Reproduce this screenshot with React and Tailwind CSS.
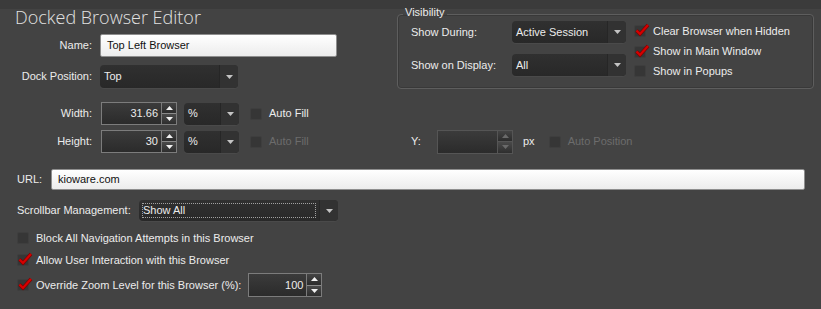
import React from 'react';

// small triangle used by combos and spin buttons
const Arrow = ({ up = false, color = '#c4c4c4' }) => (
  <svg width="7" height="4" viewBox="0 0 7 4">
    <path d={up ? 'M0 4L3.5 0L7 4Z' : 'M0 0L7 0L3.5 4Z'} fill={color} />
  </svg>
);

const Combo = ({ value, className = '', focus = false }) => (
  <div className={`flex rounded-[4px] bg-gradient-to-b from-[#303030] to-[#282828] shadow-[0_1px_0_#4a4a4a] ${className}`}>
    <div className="flex flex-1 items-center p-[3px]">
      <div className={`flex h-full flex-1 items-center ${focus ? 'border border-dotted border-[#a0a0a0]' : 'pl-[1px]'}`}>
        {value}
      </div>
    </div>
    <div className="flex w-[19px] items-center justify-center rounded-r-[4px] border-l border-[#262626] bg-[#323232]">
      <Arrow />
    </div>
  </div>
);

const Spinner = ({ value, className = 'w-[61px]', disabled = false, h = 'h-[23px]' }) => {
  const edge = disabled ? 'border-[#555555]' : 'border-[#7c7c7c]';
  const tri = disabled ? '#6a6a6a' : '#f2f2f2';
  return (
    <div className={`flex ${h}`}>
      <div className={`flex items-center justify-end border pr-[3px] bg-gradient-to-b from-[#3b3b3b] to-[#2b2b2b] ${edge} ${className}`}>
        {value}
      </div>
      <div className={`flex w-[15px] flex-col border-y border-r ${edge}`}>
        <div className="flex flex-1 items-center justify-center bg-gradient-to-b from-[#444444] to-[#2c2c2c]">
          <Arrow up color={tri} />
        </div>
        <div className={`h-px ${disabled ? 'bg-[#555555]' : 'bg-[#8a8a8a]'}`} />
        <div className="flex flex-1 items-center justify-center bg-gradient-to-b from-[#4a4a4a] to-[#2e2e2e]">
          <Arrow color={tri} />
        </div>
      </div>
    </div>
  );
};

const Check = ({ label, checked = false, disabled = false, className = '' }) => (
  <div className={`flex items-center gap-[7px] ${disabled ? 'text-[#6c6c6c]' : ''} ${className}`}>
    <div className="relative h-[12px] w-[12px] shrink-0 rounded-[2px] border border-[#3e3e3e] bg-[#363636]">
      {checked && (
        <svg className="absolute left-[0px] top-[-3px]" width="15" height="14" viewBox="0 0 15 14">
          <path d="M1.5 7.5 L5 11 L13 2" fill="none" stroke="#7a0000" strokeWidth="3.4" />
          <path d="M1.5 7.5 L5 11 L13 2" fill="none" stroke="#d60000" strokeWidth="2.2" />
        </svg>
      )}
    </div>
    <span>{label}</span>
  </div>
);

const TextBox = ({ value, className = '' }) => (
  <div className={`flex items-center rounded-[2px] border border-[#8e8e8e] bg-gradient-to-b from-[#ffffff] to-[#ececec] pl-[6px] text-[#111111] ${className}`}>
    {value}
  </div>
);

export default function App() {
  return (
    <div className="flex h-[309px] w-[821px] flex-col overflow-hidden bg-[linear-gradient(#3b3b3b_0_9px,#434343_9px)] font-['Liberation_Sans',Arial,sans-serif] text-[11px] leading-[13px] text-[#ececec]">
      {/* header + visibility group */}
      <div className="flex items-start">
        <div className="flex w-[397px] flex-col">
          <div className="mt-[5px] pl-[15px] font-['Open_Sans',sans-serif] text-[18px] font-light leading-[24px] text-[#e2e2e2]">
            Docked Browser Editor
          </div>
          <div className="mt-[5px] flex h-[23px] items-center">
            <div className="w-[92px] text-right">Name:</div>
            <TextBox value="Top Left Browser" className="ml-[8px] h-[23px] w-[237px]" />
          </div>
          <div className="mt-[8px] flex h-[23px] items-center">
            <div className="w-[92px] text-right">Dock Position:</div>
            <Combo value="Top" className="ml-[8px] h-[23px] w-[138px]" />
          </div>
        </div>

        <fieldset className="mt-[6px] h-[83px] w-[417px] rounded-[4px] border border-[#5e5e5e] shadow-[inset_0_0_0_1px_#393939]">
          <legend className="ml-[5px] px-[2px] pb-[3px] leading-[13px]">Visibility</legend>
          <div className="-mt-[1px] flex pl-[13px]">
            <div className="flex flex-col gap-[11px]">
              <div className="flex h-[22px] items-center">
                <div className="w-[101px]">Show During:</div>
                <Combo value="Active Session" className="h-[22px] w-[114px]" />
              </div>
              <div className="flex h-[22px] items-center">
                <div className="w-[101px]">Show on Display:</div>
                <Combo value="All" className="h-[22px] w-[114px]" />
              </div>
            </div>
            <div className="ml-[8px] flex flex-col">
              <Check checked label="Clear Browser when Hidden" className="h-[20px]" />
              <Check checked label="Show in Main Window" className="h-[21px]" />
              <Check label="Show in Popups" className="h-[18px]" />
            </div>
          </div>
        </fieldset>
      </div>

      {/* size rows */}
      <div className="mt-[13px] flex h-[23px] items-center">
        <div className="w-[92px] text-right">Width:</div>
        <div className="ml-[9px]">
          <Spinner value="31.66" />
        </div>
        <Combo value="%" className="ml-[7px] h-[22px] w-[55px]" />
        <Check label="Auto Fill" className="ml-[11px]" />
      </div>
      <div className="mt-[5px] flex h-[23px] items-center">
        <div className="flex w-[411px] items-center">
          <div className="w-[92px] text-right">Height:</div>
          <div className="ml-[9px]">
            <Spinner value="30" />
          </div>
          <Combo value="%" className="ml-[7px] h-[22px] w-[55px]" />
          <Check disabled label="Auto Fill" className="ml-[11px]" />
        </div>
        <div className="w-[26px]">Y:</div>
        <Spinner value="" disabled h="h-[24px]" />
        <div className="ml-[10px]">px</div>
        <Check disabled label="Auto Position" className="ml-[14px]" />
      </div>

      {/* url + scrollbars */}
      <div className="mt-[16px] flex h-[21px] items-center pl-[17px]">
        <div className="w-[34px]">URL:</div>
        <TextBox value="kioware.com" className="h-[21px] w-[754px]" />
      </div>
      <div className="mt-[10px] flex h-[21px] items-center pl-[17px]">
        <div className="w-[122px]">Scrollbar Management:</div>
        <Combo focus value="Show All" className="h-[21px] w-[199px]" />
      </div>

      {/* options */}
      <div className="mt-[9px] flex h-[16px] items-center pl-[17px]">
        <Check label="Block All Navigation Attempts in this Browser" />
      </div>
      <div className="mt-[6px] flex h-[16px] items-center pl-[17px]">
        <Check checked label="Allow User Interaction with this Browser" />
      </div>
      <div className="mt-[5px] flex h-[24px] items-center pl-[17px]">
        <Check checked label="Override Zoom Level for this Browser (%):" />
        <div className="ml-[7px]">
          <Spinner value="100" className="w-[59px]" h="h-[24px]" />
        </div>
      </div>
    </div>
  );
}
